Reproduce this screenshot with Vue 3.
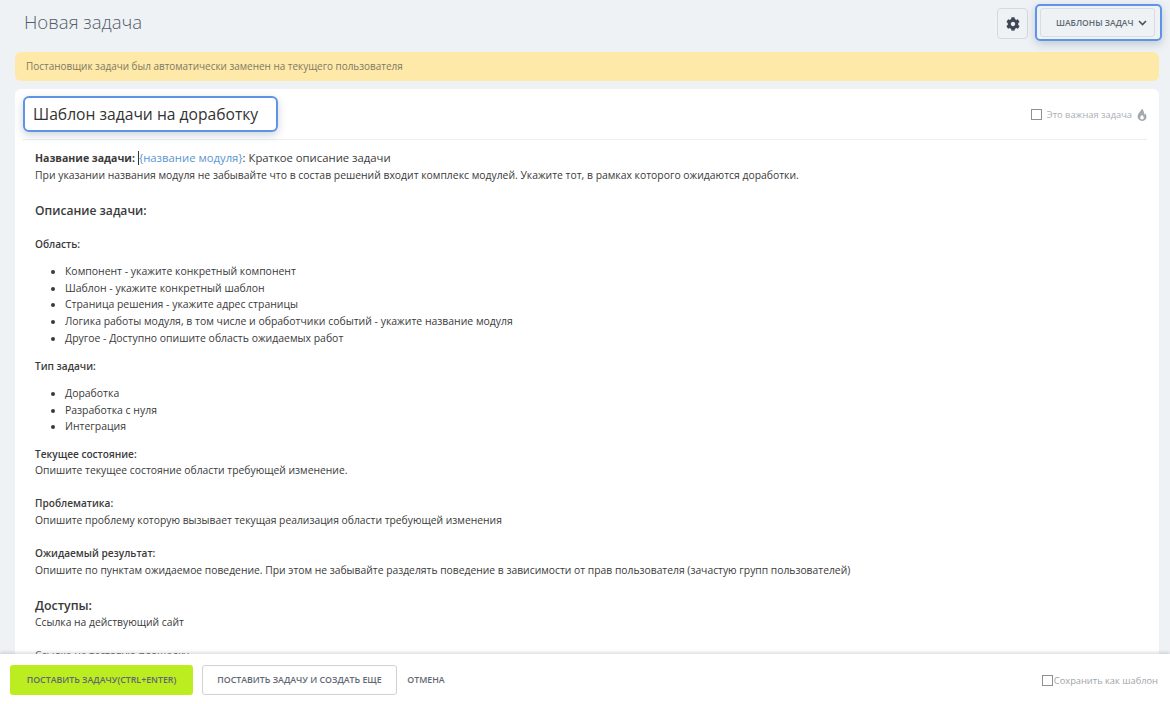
<script setup>
const areas = [
  'Компонент - укажите конкретный компонент',
  'Шаблон - укажите конкретный шаблон',
  'Страница решения - укажите адрес страницы',
  'Логика работы модуля, в том числе и обработчики событий - укажите название модуля',
  'Другое - Доступно опишите область ожидаемых работ'
]
const types = ['Доработка', 'Разработка с нуля', 'Интеграция']
</script>

<template>
  <div class="page">
    <header class="head">
      <h1 class="title">Новая задача</h1>
      <div class="head-actions">
        <button class="gear" aria-label="Настройки">
          <svg width="14" height="14" viewBox="0 0 512 512"><path fill="#3f4756" d="M487.4 315.7l-42.6-24.6c4.3-23.2 4.3-47 0-70.2l42.6-24.6c4.9-2.8 7.1-8.6 5.5-14-11.1-35.6-30-67.8-54.7-94.6-3.8-4.1-10-5.1-14.8-2.3L380.8 110c-17.9-15.4-38.5-27.3-60.8-35.1V25.8c0-5.6-3.9-10.5-9.4-11.7-36.7-8.2-74.3-7.8-109.2 0-5.5 1.2-9.4 6.1-9.4 11.7V75c-22.2 7.9-42.8 19.8-60.8 35.1L88.7 85.5c-4.9-2.8-11-1.9-14.8 2.3-24.7 26.7-43.6 58.9-54.7 94.6-1.7 5.4.6 11.2 5.5 14L67.3 221c-4.3 23.2-4.3 47 0 70.2l-42.6 24.6c-4.9 2.8-7.1 8.6-5.5 14 11.1 35.6 30 67.8 54.7 94.6 3.8 4.1 10 5.1 14.8 2.3l42.6-24.6c17.9 15.4 38.5 27.3 60.8 35.1v49.2c0 5.6 3.9 10.5 9.4 11.7 36.7 8.2 74.3 7.8 109.2 0 5.5-1.2 9.4-6.1 9.4-11.7v-49.2c22.2-7.9 42.8-19.8 60.8-35.1l42.6 24.6c4.9 2.8 11 1.9 14.8-2.3 24.7-26.7 43.6-58.9 54.7-94.6 1.5-5.5-.7-11.3-5.6-14.1zM256 336c-44.1 0-80-35.9-80-80s35.9-80 80-80 80 35.9 80 80-35.9 80-80 80z"/></svg>
        </button>
        <div class="tpl-ring">
          <button class="tpl">
            <span>ШАБЛОНЫ ЗАДАЧ</span>
            <svg width="9" height="6" viewBox="0 0 9 6"><path d="M1 1l3.5 3.5L8 1" fill="none" stroke="#4a5260" stroke-width="1.6"/></svg>
          </button>
        </div>
      </div>
    </header>

    <div class="alert">Постановщик задачи был автоматически заменен на текущего пользователя</div>

    <main class="card">
      <div class="card-top">
        <input class="name" value="Шаблон задачи на доработку" />
        <label class="important">
          <span class="box"></span>
          <span>Это важная задача</span>
          <svg width="10" height="12" viewBox="0 0 384 512"><path fill="#a4a9ae" fill-rule="evenodd" d="M216 10c-8-12-28-12-36 2C120 120 20 190 4 300c-14 110 76 212 188 212s204-100 188-212c-8-56-30-90-60-120-8 30-20 50-40 60C290 150 260 70 216 10zM192 450c-44 0-78-32-78-74 0-50 50-74 78-130 28 56 78 80 78 130 0 42-34 74-78 74z"/></svg>
        </label>
      </div>

      <div class="body">
        <p class="line lead"><b>Название задачи:</b> <span class="caret"></span><a>{название модуля}</a>: Краткое описание задачи</p>
        <p class="line">При указании названия модуля не забывайте что в состав решений входит комплекс модулей. Укажите тот, в рамках которого ожидаются доработки.</p>

        <h3 class="h-desc">Описание задачи:</h3>

        <h4 class="h-area">Область:</h4>
        <ul class="list">
          <li v-for="a in areas" :key="a">{{ a }}</li>
        </ul>

        <h4 class="h-type">Тип задачи:</h4>
        <ul class="list">
          <li v-for="t in types" :key="t">{{ t }}</li>
        </ul>

        <div class="block first">
          <b class="sub">Текущее состояние:</b>
          <p class="line para">Опишите текущее состояние области требующей изменение.</p>
        </div>
        <div class="block">
          <b class="sub">Проблематика:</b>
          <p class="line para">Опишите проблему которую вызывает текущая реализация области требующей изменения</p>
        </div>
        <div class="block">
          <b class="sub">Ожидаемый результат:</b>
          <p class="line para">Опишите по пунктам ожидаемое поведение. При этом не забывайте разделять поведение в зависимости от прав пользователя (зачастую групп пользователей)</p>
        </div>

        <h3 class="h-access">Доступы:</h3>
        <p class="line para">Ссылка на действующий сайт</p>
        <p class="line clipped">Ссылка на тестовую площадку</p>
      </div>
    </main>

    <footer class="foot">
      <button class="btn primary">ПОСТАВИТЬ ЗАДАЧУ(CTRL+ENTER)</button>
      <button class="btn ghost">ПОСТАВИТЬ ЗАДАЧУ И СОЗДАТЬ ЕЩЕ</button>
      <button class="btn cancel">ОТМЕНА</button>
      <label class="save"><span class="box big"></span><span>Сохранить как шаблон</span></label>
    </footer>
  </div>
</template>

<style>
html, body { margin: 0; background: #eef2f5; }
</style>

<style scoped>
.page {
  height: 704px; width: 1170px; overflow: hidden;
  display: flex; flex-direction: column;
  background: #eef2f5;
  font-family: "Open Sans", "Noto Sans", sans-serif;
  color: #333;
}
.head { height: 52px; flex: none; display: flex; justify-content: space-between; align-items: flex-start; padding: 0 8px 0 24px; box-sizing: border-box; }
.title { margin: 9px 0 0; font-size: 18.6px; line-height: 26px; font-weight: 300; color: #535c69; }
.head-actions { display: flex; gap: 7px; padding-top: 4px; align-items: flex-start; }
.gear { width: 31px; height: 31px; margin-top: 4px; padding: 0; border: 1px solid #d5d9dd; border-radius: 4px; background: #eef2f5; display: flex; align-items: center; justify-content: center; }
.tpl-ring { border: 2px solid #5f93e8; border-radius: 5px; padding: 2px 5px 2px 3px; box-shadow: 0 3px 8px rgba(60, 80, 110, .25); }
.tpl { height: 29px; width: 115px; padding: 0 0 0 15px; border: 1px solid #d9dde1; border-radius: 3px; background: #eef2f5; display: flex; align-items: center; gap: 5px; font: 600 8.5px "Open Sans", sans-serif; color: #5f6874; box-sizing: border-box; }
.alert { flex: none; margin: 0 11px 8px 15px; height: 29px; box-sizing: border-box; padding: 0 11px; border-radius: 6px; background: #fee9a8; color: #807a63; font-size: 9.95px; line-height: 29px; }
.card { flex: 1; min-height: 0; overflow: hidden; margin: 0 11px 0 15px; background: #fff; border-radius: 6px 6px 0 0; }
.card-top { height: 51px; box-sizing: border-box; margin: 0 12px 0 8px; padding-top: 7px; display: flex; justify-content: space-between; align-items: flex-start; border-bottom: 1px solid #eceef0; }
.name { width: 255px; height: 36px; box-sizing: border-box; border: 2px solid #5f93e8; border-radius: 6px; padding: 0 8px; font: 400 15.65px "Open Sans", sans-serif; color: #333; outline: none; box-shadow: 0 3px 8px rgba(60, 80, 110, .25); }
.important { display: flex; align-items: center; gap: 5px; font-size: 9.3px; color: #a9adb2; margin: 12px 0 0 0; }
.box { display: inline-block; width: 9px; height: 9px; border: 1px solid #8c9196; background: #fff; }
.body { padding: 10px 12px 0 20px; font-size: 10.38px; line-height: 16.6px; color: #3a3a3a; }
.line { margin: 0; }
.para { font-size: 10.33px; }
.lead { font-size: 11.3px; }
.lead b { font-size: 10.55px; }
.lead a { color: #5b95cf; }
.caret { display: inline-block; width: 1px; height: 14px; background: #333; vertical-align: -3px; }
.h-desc { margin: 19px 0 0; font-size: 12.1px; line-height: 18px; font-weight: 600; }
.h-area { margin: 16px 0 0; font-size: 10.1px; line-height: 17px; font-weight: 600; }
.h-type { margin: 12px 0 0; font-size: 10.1px; line-height: 17px; font-weight: 600; }
.list { margin: 10px 0 0; padding: 0 0 0 30px; font-size: 10.45px; }
.block { margin-top: 16.6px; }
.block.first { margin-top: 10.6px; }
.sub { font-weight: 600; font-size: 10.1px; }
.h-access { margin: 19px 0 0; font-size: 12.4px; line-height: 17px; font-weight: 600; }
.clipped { margin-top: 16px; color: #6f6f6f; }
.foot { position: relative; flex: none; height: 50px; box-sizing: border-box; background: #fff; box-shadow: 0 -2px 3px rgba(0, 0, 0, .12); display: flex; align-items: center; padding: 2px 12px 0 10px; }
.btn { height: 30px; border-radius: 3px; font: 600 8.8px "Open Sans", sans-serif; color: #5f6874; padding: 0; }
.primary { width: 183px; background: #bbed21; border: none; }
.ghost { width: 195px; margin-left: 9px; background: #fff; border: 1px solid #ced2d6; }
.cancel { width: 48px; background: none; border: none; margin-left: 5px; }
.save { margin-left: auto; display: flex; align-items: center; gap: 1px; font-size: 9.3px; color: #a0a4a9; }
.box.big { width: 9px; height: 9px; }
</style>
